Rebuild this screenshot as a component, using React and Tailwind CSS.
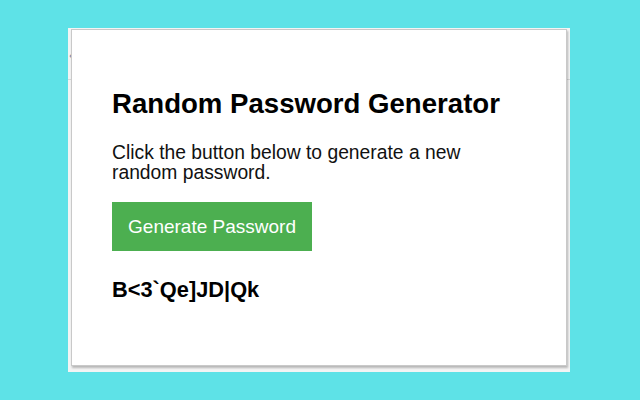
export default function App() {
  return (
    <div className="w-[640px] h-[400px] bg-[#5ee2e7] pt-[28px] pl-[68px]" style={{ fontFamily: '"Liberation Sans", Arial, sans-serif' }}>
      <div className="relative w-[502px] h-[344px] bg-[#f4f4f4]">
        <div className="absolute left-0 right-0 top-[51px] h-px bg-[#d8d8d8]" />
        <div className="absolute left-[1px] top-[20px] text-[14px] leading-none text-[#7a8aa8]">‹</div>
        <div className="absolute left-[3px] top-[1px] w-[496px] h-[337px] bg-white border border-[#c9c9c9] shadow-[1px_2px_2px_rgba(0,0,0,0.25)] pl-[40px] pt-[58px]">
          <h1 className="text-[27.6px] font-bold leading-[32px] text-black">Random Password Generator</h1>
          <p className="mt-[23px] text-[19.3px] leading-[20px] text-[#111] w-[380px]">Click the button below to generate a new random password.</p>
          <button className="mt-[19px] w-[200px] h-[49px] bg-[#4caf50] text-white text-[19px] leading-none">Generate Password</button>
          <div className="mt-[26px] text-[21.8px] font-bold leading-[26px] text-black">B&lt;3`Qe]JD|Qk</div>
        </div>
      </div>
    </div>
  );
}
